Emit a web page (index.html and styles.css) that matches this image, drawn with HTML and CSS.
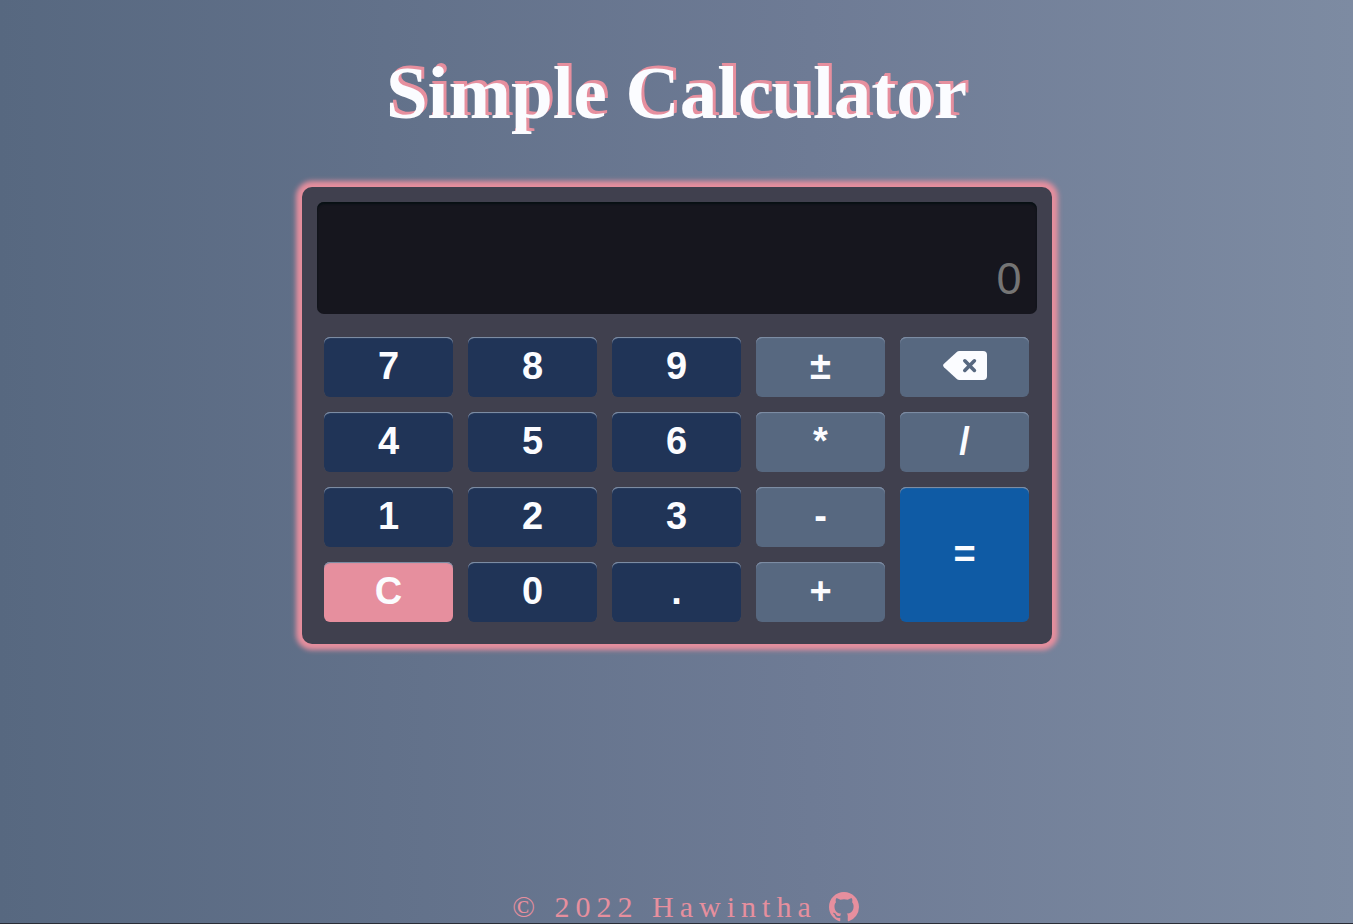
FILE: index.html
```html
<!DOCTYPE html>
<html lang="en">
<head>
<meta charset="utf-8">
<meta name="viewport" content="width=device-width, initial-scale=1">
<title>Simple Calculator</title>
<link rel="stylesheet" href="styles.css">
</head>
<body>
<h1 class="title">Simple Calculator</h1>
<main class="calculator">
  <input class="display" type="text" placeholder="0" aria-label="Result" readonly>
  <div class="keys">
    <button class="key" type="button">7</button>
    <button class="key" type="button">8</button>
    <button class="key" type="button">9</button>
    <button class="key operator" type="button">±</button>
    <button class="key operator" type="button" aria-label="Backspace">
      <svg class="backspace" viewBox="0 0 44 30" aria-hidden="true"><path fill="currentColor" d="M13.5 1.2Q14.8 0 16.5 0H40Q44 0 44 4V25Q44 29 40 29H16.5Q14.8 29 13.5 27.8L1 16.2Q-.8 14.5 1 12.8Z"/><path fill="none" stroke="#576880" stroke-width="3.6" stroke-linecap="round" d="M21.8 9.8l9.6 9.6M31.4 9.8L21.8 19.4"/></svg>
    </button>
    <button class="key" type="button">4</button>
    <button class="key" type="button">5</button>
    <button class="key" type="button">6</button>
    <button class="key operator" type="button">*</button>
    <button class="key operator" type="button">/</button>
    <button class="key" type="button">1</button>
    <button class="key" type="button">2</button>
    <button class="key" type="button">3</button>
    <button class="key operator" type="button">-</button>
    <button class="key equals" type="button">=</button>
    <button class="key clear" type="button">C</button>
    <button class="key" type="button">0</button>
    <button class="key" type="button">.</button>
    <button class="key operator" type="button">+</button>
  </div>
</main>
<footer class="footer">
  <span>© 2022 Hawintha</span>
  <a class="github" href="#" aria-label="GitHub"><svg viewBox="0 0 16 16" aria-hidden="true"><path fill="currentColor" d="M8 0C3.58 0 0 3.58 0 8c0 3.54 2.29 6.53 5.47 7.59.4.07.55-.17.55-.38 0-.19-.01-.82-.01-1.49-2.01.37-2.53-.49-2.69-.94-.09-.23-.48-.94-.82-1.13-.28-.15-.68-.52-.01-.53.63-.01 1.08.58 1.23.82.72 1.21 1.87.87 2.33.66.07-.52.28-.87.51-1.07-1.78-.2-3.64-.89-3.64-3.95 0-.87.31-1.59.82-2.15-.08-.2-.36-1.02.08-2.12 0 0 .67-.21 2.2.82.64-.18 1.32-.27 2-.27s1.36.09 2 .27c1.53-1.04 2.2-.82 2.2-.82.44 1.1.16 1.92.08 2.12.51.56.82 1.27.82 2.15 0 3.07-1.87 3.75-3.65 3.95.29.25.54.73.54 1.48 0 1.07-.01 1.93-.01 2.2 0 .21.15.46.55.38A8.01 8.01 0 0 0 16 8c0-4.42-3.58-8-8-8z"/></svg></a>
</footer>
</body>
</html>
```
FILE: styles.css
```css
* {
  box-sizing: border-box;
}

body {
  margin: 0;
  min-height: 100vh;
  display: flex;
  flex-direction: column;
  align-items: center;
  font-family: "Liberation Serif", "Times New Roman", serif;
  color: #fbfcff;
  background: linear-gradient(to right, #576880, #6e7b95 60%, #7d8ba2);
  border-bottom: 1px solid #292d36;
}

.title {
  margin: 49px 16px 51px;
  font-size: 75px;
  line-height: 87px;
  text-align: center;
  text-shadow: 3px -3px 0 #e68f9e;
}

.calculator {
  width: 100%;
  max-width: 750px;
  padding: 15px 15px 22px;
  border-radius: 10px;
  background: #40404e;
  box-shadow: 0 0 5px 6px #e68f9e;
}

.display {
  display: block;
  width: 100%;
  height: 112px;
  padding: 50px 15px 8px;
  border: 0;
  border-radius: 7px;
  background: #16161e;
  box-shadow: inset 0 2px 2px #071014;
  color: #fbfcff;
  font-family: "Liberation Sans", Arial, sans-serif;
  font-size: 45px;
  text-align: right;
}

.display::placeholder {
  color: #757575;
  opacity: 1;
}

.keys {
  display: grid;
  grid-template-columns: repeat(5, 1fr);
  grid-auto-rows: 60px;
  gap: 15px;
  padding: 23px 8px 0 7px;
}

.key {
  display: flex;
  align-items: center;
  justify-content: center;
  padding: 0 0 2px 1px;
  border: 0;
  border-radius: 6px;
  background: #203457;
  box-shadow: inset 0 2px 1px -1px #7d8ca3, inset 0 1px 0 #7d8ca3;
  color: #fbfcff;
  font: bold 38px/44px "Liberation Sans", Arial, sans-serif;
  cursor: pointer;
}

.operator {
  background: #576880;
}

.equals {
  grid-row: span 2;
  background: #0f5ba5;
}

.clear {
  background: #e68f9e;
}

.backspace {
  width: 44px;
  height: 30px;
}

.footer {
  display: flex;
  align-items: center;
  gap: 12px;
  margin-top: auto;
  padding-left: 18px;
  color: #e68f9e;
  font-size: 30px;
  line-height: 33px;
  letter-spacing: 6px;
}

.github {
  width: 30px;
  height: 30px;
  color: inherit;
}

.github svg {
  display: block;
}
```
